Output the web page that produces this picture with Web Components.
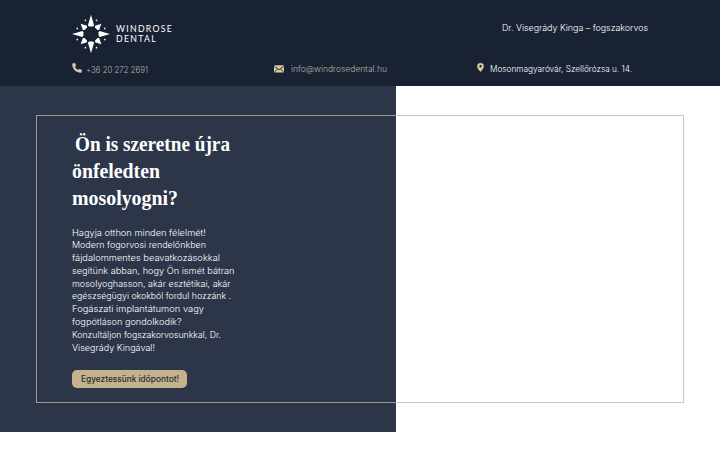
<!DOCTYPE html>
<html lang="hu">
<head>
<meta charset="utf-8">
<title>Windrose Dental</title>
<style>
  body {
    margin: 0;
    background: #fff;
    font-family: Inter, "Open Sans", sans-serif;
  }
</style>
</head>
<body>
<site-header></site-header>
<hero-section></hero-section>

<script>
// One line of text, fitted to a fixed measure
class TextLine extends HTMLElement {
  connectedCallback() {
    this.attachShadow({ mode: 'open' });
    this.shadowRoot.innerHTML = `
      <style>
        :host { display: block; white-space: nowrap; }
        span { display: inline-block; transform-origin: 0 50%; }
      </style>
      <span><slot></slot></span>
    `;
    const span = this.shadowRoot.querySelector('span');
    const target = Number(this.getAttribute('measure'));
    const natural = span.getBoundingClientRect().width;
    if (target && natural) {
      span.style.transform = `scaleX(${target / natural})`;
      this.style.width = target + 'px';
    }
  }
}
customElements.define('text-line', TextLine);

// Compass star and wordmark
class BrandLogo extends HTMLElement {
  connectedCallback() {
    this.attachShadow({ mode: 'open' });
    this.shadowRoot.innerHTML = `
      <style>
        :host { display: flex; gap: 6px; color: #fff; }
        svg { width: 38px; height: 40px; flex: none; }
        .name {
          padding-top: 10px;
          font: 400 9.6px/10px Lato, sans-serif;
          letter-spacing: 1.4px;
        }
      </style>
      <svg viewBox="-19 -20 38 40" fill="#fff">
        <defs>
          <path id="long" d="M0-19.2 3.1-8.6 1.8-7.6-1.8-7.6-3.1-8.6Z"/>
          <path id="short" d="M0-14.6 2.9-8.6 1.7-7.4-1.7-7.4-2.9-8.6Z"/>
          <circle id="dot" cy="-14.8" r=".85"/>
        </defs>
        <use href="#long"/>
        <use href="#long" transform="rotate(90)"/>
        <use href="#long" transform="rotate(180)"/>
        <use href="#long" transform="rotate(270)"/>
        <use href="#short" transform="rotate(45)"/>
        <use href="#short" transform="rotate(135)"/>
        <use href="#short" transform="rotate(225)"/>
        <use href="#short" transform="rotate(315)"/>
        <use href="#dot" transform="rotate(22)"/>
        <use href="#dot" transform="rotate(68)"/>
        <use href="#dot" transform="rotate(112)"/>
        <use href="#dot" transform="rotate(158)"/>
        <use href="#dot" transform="rotate(202)"/>
        <use href="#dot" transform="rotate(248)"/>
        <use href="#dot" transform="rotate(292)"/>
        <use href="#dot" transform="rotate(338)"/>
      </svg>
      <div class="name">
        <text-line measure="57">WINDROSE</text-line>
        <text-line measure="41">DENTAL</text-line>
      </div>
    `;
  }
}
customElements.define('brand-logo', BrandLogo);

const ICONS = {
  phone: `<svg width="10" height="10" viewBox="0 0 10 10"><path fill="#d9c99d" d="M.7.5 2.6.1Q3 0 3.2.4L4.1 2.5Q4.2 2.8 3.9 3.1L2.9 3.9Q3.9 6 6.1 7.1L6.9 6.1Q7.2 5.8 7.5 5.9L9.6 6.8Q10 7 9.9 7.4L9.5 9.3Q9.4 9.8 8.9 9.8C3.8 9.7.3 6.1.2 1.1Q.2.6.7.5Z"/></svg>`,
  mail: `<svg width="10" height="8" viewBox="0 0 10 8"><rect y=".3" width="10" height="7.2" rx="1.1" fill="#d9c99d"/><path d="M.5 1.5 5 4.7 9.5 1.5M.7 6.8 3.5 4M9.3 6.8 6.5 4" fill="none" stroke="#192233" stroke-width=".9"/></svg>`,
  pin: `<svg width="7" height="9" viewBox="0 0 7 9"><path fill="#d9c99d" fill-rule="evenodd" d="M3.5.1A3.3 3.3 0 0 1 6.8 3.4C6.8 5 5.2 7 3.5 8.9 1.8 7 .2 5 .2 3.4A3.3 3.3 0 0 1 3.5.1ZM3.5 2.1A1.2 1.2 0 1 0 3.5 4.5 1.2 1.2 0 1 0 3.5 2.1Z"/></svg>`
};

class ContactItem extends HTMLElement {
  connectedCallback() {
    this.attachShadow({ mode: 'open' });
    this.shadowRoot.innerHTML = `
      <style>
        :host {
          display: flex;
          align-items: center;
          gap: var(--icon-gap, 6px);
          height: 14px;
          font-size: 8.3px;
          line-height: 14px;
          font-weight: 300;
        }
        svg { display: block; flex: none; margin-top: var(--icon-shift, 0); }
      </style>
      ${ICONS[this.getAttribute('icon')]}
      <slot></slot>
    `;
  }
}
customElements.define('contact-item', ContactItem);

class SiteHeader extends HTMLElement {
  connectedCallback() {
    this.attachShadow({ mode: 'open' });
    this.shadowRoot.innerHTML = `
      <style>
        :host {
          display: block;
          box-sizing: border-box;
          height: 86px;
          padding: 14px 72px 0;
          background: #192233;
          color: #fff;
        }
        .top { display: flex; justify-content: space-between; height: 47px; }
        .doctor { padding-top: 7px; font-size: 9px; line-height: 14px; font-weight: 300; }
        .contacts {
          display: grid;
          grid-template-columns: 202px 203px 1fr;
        }
        .phone { --icon-gap: 4px; --icon-shift: -5px; color: #b6b2a2; padding-top: 2px; }
        .mail { --icon-gap: 7px; --icon-shift: -1px; color: #b6b2a2; padding-top: 1px; }
        .pin { --icon-shift: -3px; padding-top: 1px; }
      </style>
      <div class="top">
        <brand-logo></brand-logo>
        <div class="doctor"><text-line measure="146">Dr. Visegrády Kinga – fogszakorvos</text-line></div>
      </div>
      <div class="contacts">
        <contact-item class="phone" icon="phone"><text-line measure="62">+36 20 272 2691</text-line></contact-item>
        <contact-item class="mail" icon="mail"><text-line measure="96">info@windrosedental.hu</text-line></contact-item>
        <contact-item class="pin" icon="pin"><text-line measure="142">Mosonmagyaróvár, Szellőrózsa u. 14.</text-line></contact-item>
      </div>
    `;
  }
}
customElements.define('site-header', SiteHeader);

class CtaButton extends HTMLElement {
  connectedCallback() {
    this.attachShadow({ mode: 'open' });
    this.shadowRoot.innerHTML = `
      <style>
        :host {
          display: flex;
          justify-content: center;
          width: 115px;
          height: 18px;
          border-radius: 5px;
          background: #c4b28c;
          color: #242b38;
          font-size: 8.3px;
          font-weight: 500;
          line-height: 18px;
          cursor: pointer;
        }
      </style>
      <slot></slot>
    `;
  }
}
customElements.define('cta-button', CtaButton);

class HeroSection extends HTMLElement {
  connectedCallback() {
    this.attachShadow({ mode: 'open' });
    this.shadowRoot.innerHTML = `
      <style>
        :host {
          display: block;
          box-sizing: border-box;
          height: 346px;
          padding: 29px 36px;
          background: linear-gradient(#2c3648, #2c3648) 0 0 / 396px 100% no-repeat #fff;
          color: #fff;
        }
        .frame {
          box-sizing: border-box;
          height: 288px;
          padding: 15px 35px 0;
          border: 1px solid rgba(190, 184, 162, .78);
        }
        h1 {
          margin: 0;
          font: 700 21.5px/27px "Liberation Serif", serif;
          color: #fff;
        }
        .indent { margin-left: 3px; }
        .copy {
          margin: 14.5px 0 15.7px;
          font-size: 9px;
          font-weight: 300;
          line-height: 12.78px;
        }
      </style>
      <div class="frame">
        <h1>
          <text-line class="indent" measure="155">Ön is szeretne újra</text-line>
          <text-line measure="88">önfeledten</text-line>
          <text-line measure="106">mosolyogni?</text-line>
        </h1>
        <div class="copy">
          <text-line measure="134">Hagyja otthon minden félelmét!</text-line>
          <text-line measure="134">Modern fogorvosi rendelőnkben</text-line>
          <text-line measure="148">fájdalommentes beavatkozásokkal</text-line>
          <text-line measure="162.5">segítünk abban, hogy Ön ismét bátran</text-line>
          <text-line measure="158.5">mosolyoghasson, akár esztétikai, akár</text-line>
          <text-line measure="159">egészségügyi okokból fordul hozzánk .</text-line>
          <text-line measure="132">Fogászati implantátumon vagy</text-line>
          <text-line measure="109.5">fogpótláson gondolkodik?</text-line>
          <text-line measure="149">Konzultáljon fogszakorvosunkkal, Dr.</text-line>
          <text-line measure="83">Visegrády Kingával!</text-line>
        </div>
        <cta-button><text-line measure="98">Egyeztessünk időpontot!</text-line></cta-button>
      </div>
    `;
  }
}
customElements.define('hero-section', HeroSection);
</script>
</body>
</html>
